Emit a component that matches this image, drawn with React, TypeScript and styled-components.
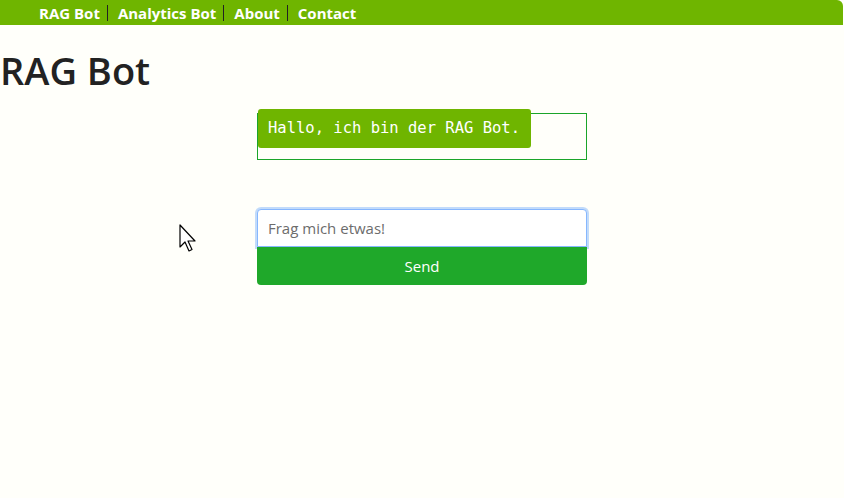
import React from "react";
import styled, { createGlobalStyle } from "styled-components";

const GlobalStyle = createGlobalStyle`
  html, body {
    margin: 0;
    padding: 0;
    background: #fffffa;
    font-family: "Open Sans", "Noto Sans", sans-serif;
    color: #222;
  }
`;

const Page = styled.div`
  position: relative;
  min-height: 498px;
`;

const Nav = styled.nav`
  display: flex;
  align-items: center;
  height: 25px;
  padding-left: 39px;
  background: #6fb500;
  border-top-right-radius: 6px;
  margin-right: 1px;
`;

const NavItem = styled.a<{ $last?: boolean }>`
  color: #fff;
  font-weight: 700;
  font-size: 15px;
  line-height: 16px;
  text-decoration: none;
  padding-right: 7px;
  margin-right: 10px;
  border-right: ${({ $last }) => ($last ? "none" : "1px solid #222")};
`;

const Title = styled.h1`
  margin: 20px 0 0;
  font-size: 38px;
  font-weight: 600;
  line-height: 50px;
  color: #222;
`;

const Chat = styled.div`
  width: 330px;
  margin: 18px auto 0;
`;

const Log = styled.div`
  border: 1px solid #1aa52a;
  padding-bottom: 11px;
`;

const Bubble = styled.div`
  display: inline-block;
  margin-top: -5px;
  padding: 0 11px 0 10px;
  height: 39px;
  line-height: 39px;
  background: #6fb500;
  border-radius: 3px;
  color: #fff;
  font-family: "DejaVu Sans Mono", "Liberation Mono", monospace;
  font-size: 15.5px;
`;

const Input = styled.input`
  display: block;
  box-sizing: border-box;
  width: 100%;
  height: 38px;
  margin-top: 49px;
  padding: 0 10px;
  border: 1px solid #86b7fe;
  border-radius: 4px 4px 0 0;
  box-shadow: 0 0 0 2px rgba(13, 110, 253, 0.25);
  outline: none;
  background: #fff;
  font-family: "Open Sans", "Noto Sans", sans-serif;
  font-size: 15px;
  color: #222;

  &::placeholder {
    color: #6c6c6c;
  }
`;

const SendButton = styled.button`
  display: block;
  width: 100%;
  height: 38px;
  border: none;
  border-radius: 0 0 4px 4px;
  background: #1fa82a;
  color: #fff;
  font-family: "Open Sans", "Noto Sans", sans-serif;
  font-size: 15px;
  cursor: pointer;
`;

const Cursor = styled.svg`
  position: absolute;
  left: 179px;
  top: 224px;
`;

export default function App() {
  return (
    <Page>
      <GlobalStyle />
      <Nav>
        <NavItem href="#">RAG Bot</NavItem>
        <NavItem href="#">Analytics Bot</NavItem>
        <NavItem href="#">About</NavItem>
        <NavItem href="#" $last>Contact</NavItem>
      </Nav>
      <Title>RAG Bot</Title>
      <Chat>
        <Log>
          <Bubble>Hallo, ich bin der RAG Bot.</Bubble>
        </Log>
        <Input placeholder="Frag mich etwas!" />
        <SendButton>Send</SendButton>
      </Chat>
      <Cursor width="20" height="30" viewBox="0 0 20 30">
        <path
          d="M1 1 L1 23 L6 18 L10 27 L13 25.5 L9 17 L16 17 Z"
          fill="#fff"
          stroke="#000"
          strokeWidth="1.2"
          strokeLinejoin="round"
        />
      </Cursor>
    </Page>
  );
}
